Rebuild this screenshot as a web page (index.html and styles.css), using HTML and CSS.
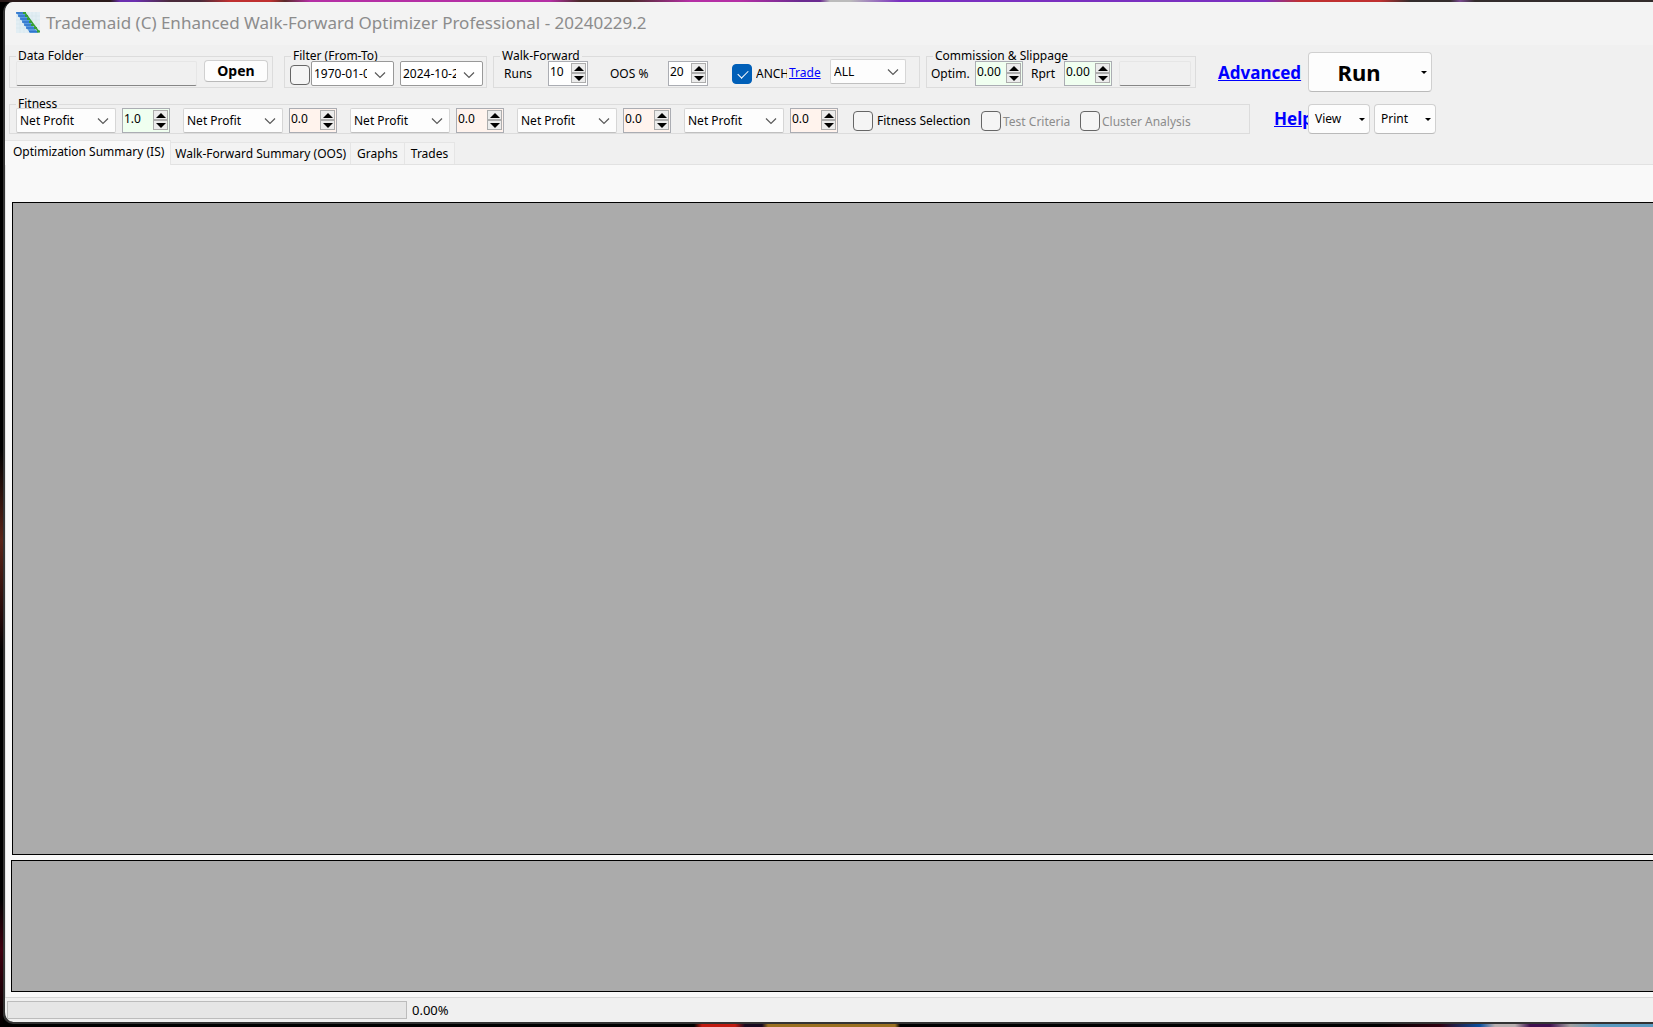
FILE: index.html
```html
<!DOCTYPE html>
<html lang="en">
<head>
  <meta charset="UTF-8" />
  <meta name="viewport" content="width=device-width, initial-scale=1.0" />
  <title>Trademaid (C) Enhanced Walk-Forward Optimizer Professional</title>
  <link rel="stylesheet" href="styles.css">
</head>
<body>
  <svg class="defs" width="0" height="0">
    <symbol id="chevron" viewBox="0 0 12 8"><path d="M1 1.5 6 6.5 11 1.5" fill="none" stroke="#5a5a5a" stroke-width="1.2"/></symbol>
    <symbol id="up" viewBox="0 0 10 5"><path d="M5 0 10 5H0z"/></symbol>
    <symbol id="down" viewBox="0 0 10 5"><path d="M0 0h10L5 5z"/></symbol>
  </svg>

  <div class="window">
    <header class="titlebar">
      <svg class="app-icon" viewBox="0 0 24 21">
        <path fill="#e2eef4" d="M0 0h24v21H0z"/>
        <path stroke="#d2e2ea" stroke-width=".5" d="M4 0v21M8 0v21M12 0v21M16 0v21M20 0v21M0 4h24M0 8h24M0 12h24M0 16h24"/>
        <path fill="#5a9be0" d="M0 0h8l14 21h-8z"/>
        <path stroke="#2f74cc" stroke-width="1.500" d="M0 1h8M2 4h8M4 7h8M6 10h8M8 13h8M10 16h9M13 19.500h9"/>
        <path stroke="#35a035" stroke-width="2" d="M7 1h3M9 4h3M11 7h3M13 10h3M15 13h3M18 16h3M21 19.500h3"/>
        <path stroke="#35a035" stroke-width="1.500" fill="none" d="M9 1l14 19"/>
      </svg>
      <h1>Trademaid (C) Enhanced Walk-Forward Optimizer Professional - 20240229.2</h1>
    </header>

    <div class="toolbar">
      <fieldset class="group">
        <legend>Data Folder</legend>
        <div class="fields folder">
          <input type="text" class="flat-input" aria-label="Data folder" readonly>
          <button class="btn open-btn">Open</button>
        </div>
      </fieldset>

      <fieldset class="group filter-group">
        <legend>Filter (From-To)</legend>
        <div class="fields filter">
          <input type="checkbox" class="check" aria-label="Use date filter">
          <div class="date"><input type="text" aria-label="From" value="1970-01-01"><svg class="chevron"><use href="#chevron"/></svg></div>
          <div class="date to"><input type="text" aria-label="To" value="2024-10-24"><svg class="chevron"><use href="#chevron"/></svg></div>
        </div>
      </fieldset>

      <fieldset class="group">
        <legend>Walk-Forward</legend>
        <div class="fields walk">
          <label class="runs" for="runs">Runs</label>
          <div class="spin narrow"><input type="text" id="runs" value="10"><span class="arrows"><button aria-label="Up"><svg><use href="#up"/></svg></button><button aria-label="Down"><svg><use href="#down"/></svg></button></span></div>
          <label class="oos" for="oos">OOS %</label>
          <div class="spin narrow"><input type="text" id="oos" value="20"><span class="arrows"><button aria-label="Up"><svg><use href="#up"/></svg></button><button aria-label="Down"><svg><use href="#down"/></svg></button></span></div>
          <input type="checkbox" class="check anch-check" id="anch" checked>
          <label class="anch" for="anch">ANCH</label>
          <a href="#" class="trade">Trade</a>
          <div class="combo trade-combo"><select aria-label="Trade"><option>ALL</option></select><svg class="chevron"><use href="#chevron"/></svg></div>
        </div>
      </fieldset>

      <fieldset class="group">
        <legend>Commission &amp; Slippage</legend>
        <div class="fields commission">
          <label class="optim" for="optim">Optim.</label>
          <div class="spin green"><input type="text" id="optim" value="0.00"><span class="arrows"><button aria-label="Up"><svg><use href="#up"/></svg></button><button aria-label="Down"><svg><use href="#down"/></svg></button></span></div>
          <label class="rprt" for="rprt">Rprt</label>
          <div class="spin green"><input type="text" id="rprt" value="0.00"><span class="arrows"><button aria-label="Up"><svg><use href="#up"/></svg></button><button aria-label="Down"><svg><use href="#down"/></svg></button></span></div>
          <input type="text" class="flat-input small" aria-label="Slippage" readonly>
        </div>
      </fieldset>

      <a href="#" class="big-link advanced">Advanced</a>
      <button class="btn run-btn"><span>Run</span><i class="caret"></i></button>
    </div>

    <div class="toolbar second">
      <fieldset class="group fitness-group">
        <legend>Fitness</legend>
        <div class="fields fitness">
          <div class="combo"><select aria-label="Fitness 1"><option>Net Profit</option></select><svg class="chevron"><use href="#chevron"/></svg></div>
          <div class="spin green"><input type="text" aria-label="Weight 1" value="1.0"><span class="arrows"><button aria-label="Up"><svg><use href="#up"/></svg></button><button aria-label="Down"><svg><use href="#down"/></svg></button></span></div>
          <div class="combo"><select aria-label="Fitness 2"><option>Net Profit</option></select><svg class="chevron"><use href="#chevron"/></svg></div>
          <div class="spin pink"><input type="text" aria-label="Weight 2" value="0.0"><span class="arrows"><button aria-label="Up"><svg><use href="#up"/></svg></button><button aria-label="Down"><svg><use href="#down"/></svg></button></span></div>
          <div class="combo"><select aria-label="Fitness 3"><option>Net Profit</option></select><svg class="chevron"><use href="#chevron"/></svg></div>
          <div class="spin pink"><input type="text" aria-label="Weight 3" value="0.0"><span class="arrows"><button aria-label="Up"><svg><use href="#up"/></svg></button><button aria-label="Down"><svg><use href="#down"/></svg></button></span></div>
          <div class="combo"><select aria-label="Fitness 4"><option>Net Profit</option></select><svg class="chevron"><use href="#chevron"/></svg></div>
          <div class="spin pink"><input type="text" aria-label="Weight 4" value="0.0"><span class="arrows"><button aria-label="Up"><svg><use href="#up"/></svg></button><button aria-label="Down"><svg><use href="#down"/></svg></button></span></div>
          <div class="combo"><select aria-label="Fitness 5"><option>Net Profit</option></select><svg class="chevron"><use href="#chevron"/></svg></div>
          <div class="spin pink"><input type="text" aria-label="Weight 5" value="0.0"><span class="arrows"><button aria-label="Up"><svg><use href="#up"/></svg></button><button aria-label="Down"><svg><use href="#down"/></svg></button></span></div>
          <label class="option selection"><input type="checkbox" class="check">Fitness Selection</label>
          <label class="option criteria"><input type="checkbox" class="check" disabled>Test Criteria</label>
          <label class="option cluster"><input type="checkbox" class="check" disabled>Cluster Analysis</label>
        </div>
      </fieldset>

      <a href="#" class="big-link help">Help</a>
      <button class="btn menu-btn"><span>View</span><i class="caret"></i></button>
      <button class="btn menu-btn"><span>Print</span><i class="caret"></i></button>
    </div>

    <nav class="tabs" role="tablist">
      <button class="tab active" role="tab">Optimization Summary (IS)</button>
      <button class="tab wide" role="tab">Walk-Forward Summary (OOS)</button>
      <button class="tab" role="tab">Graphs</button>
      <button class="tab" role="tab">Trades</button>
    </nav>

    <main class="page">
      <div class="grid main-grid"></div>
      <div class="grid sub-grid"></div>
    </main>

    <footer class="statusbar">
      <div class="progress"></div>
      <span>0.00%</span>
    </footer>
  </div>
</body>
</html>
```
FILE: styles.css
```css
* {
  box-sizing: border-box;
}

body {
  margin: 0;
  height: 100vh;
  padding: 2px 0 5px 3px;
  overflow: hidden;
  font-family: "Noto Sans", sans-serif;
  font-size: 12px;
  color: #000;
  background:
    linear-gradient(90deg, #2a1a1a 0 110px, #6b2fb0 120px 135px, #4a2a3a 170px 200px, #c03030 230px 270px, #5a2a2a 285px, #b52fa5 310px 550px, #4a2a2a 580px 630px, #b52fa5 690px 740px, #6a2a90 800px 820px, #bbb 830px 850px, #7a2fc0 900px 1265px, #c03030 1300px 1380px, #332c2c 1410px 1450px, #7a4a90 1460px, #332c2c 1475px) 0 0 / 100% 2px no-repeat,
    linear-gradient(90deg, #000 0 694px, #c01a10 702px 735px, #180a20 745px 762px, #9a7020 768px 895px, #000 900px 1380px, #300010 1440px, #0a50a0 1480px, #b8b0b0 1495px 1515px, #401050 1530px 1550px, #a0a0a0 1570px, #5a9ac0 1600px) 0 100% / 100% 3px no-repeat,
    linear-gradient(#000 0 450px, #5a2418 540px, #200808 620px, #000 650px 900px, #400010 950px, #000) 0 0 / 3px 100% no-repeat,
    #000;
}

input, select, button {
  font: inherit;
  color: inherit;
  margin: 0;
  padding: 0;
}

.defs {
  position: absolute;
}

.window {
  display: flex;
  flex-direction: column;
  height: 100%;
  border-left: 2px solid #333;
  border-radius: 10px 0 0 10px;
  background: #f0f0f0;
  box-shadow: 0 2px 0 #333;
  overflow: hidden;
}

.titlebar {
  display: flex;
  align-items: center;
  gap: 6px;
  height: 43px;
  padding: 0 11px 3px;
  background: #f3f3f3;
}

.app-icon {
  width: 24px;
  height: 21px;
}

.titlebar h1 {
  margin: 0;
  font-size: 17px;
  font-weight: 400;
  color: #8c8c8c;
  white-space: nowrap;
}

/* toolbars */
.toolbar {
  display: flex;
  align-items: flex-start;
  padding: 7px 4px 12px;
  white-space: nowrap;
}

.toolbar.second {
  padding: 0 4px 6px;
}

.group {
  flex: none;
  height: 32px;
  min-width: 0;
  margin: 4px 6px 0 0;
  padding: 0;
  border: 1px solid #dcdcdc;
}

.group legend {
  height: 1px;
  margin-left: 6px;
  padding: 0 2px;
  line-height: 0;
}

.fields {
  display: flex;
  align-items: flex-end;
  height: 29px;
}

.folder {
  gap: 7px;
  padding: 0 4px 0 6px;
}

.flat-input {
  width: 181px;
  height: 25px;
  border: 1px solid #e6e6e6;
  border-bottom-color: #868686;
  border-radius: 2px;
  background: #f0f0f0;
}

.flat-input.small {
  width: 72px;
  margin-left: 7px;
}

.btn {
  border: 1px solid #d0d0d0;
  border-bottom-color: #bababa;
  border-radius: 4px;
  background: #fdfdfd;
}

.open-btn {
  width: 64px;
  height: 22px;
  margin-bottom: 4px;
  font-size: 14px;
  font-weight: 700;
  line-height: 18px;
}

.group:first-child {
  margin-right: 11px;
}

.filter {
  padding: 0 3px 0 5px;
}

.check {
  appearance: none;
  position: relative;
  flex: none;
  width: 20px;
  height: 20px;
  border: 1px solid #666;
  border-radius: 4px;
  background: #f5f5f5;
}

.filter .check {
  margin: 0 1px 1px 0;
}

.check:checked {
  border-color: #005fb8;
  background: #005fb8;
}

.check:checked::after {
  content: "";
  position: absolute;
  left: 5px;
  top: 5px;
  width: 9px;
  height: 5px;
  border-left: 1px solid #fff;
  border-bottom: 1px solid #fff;
  transform: rotate(-45deg);
}

.date {
  position: relative;
  width: 83px;
  height: 25px;
  border: 1px solid #999;
  border-radius: 2px;
  background: #fff;
}

.date.to {
  margin-left: 6px;
}

.date input {
  width: 55px;
  height: 23px;
  padding-left: 2px;
  border: 0;
  background: none;
}

.chevron {
  position: absolute;
  right: 7px;
  top: 9px;
  width: 12px;
  height: 8px;
  pointer-events: none;
}

.combo {
  position: relative;
  width: 100px;
  height: 25px;
}

.combo select {
  appearance: none;
  width: 100%;
  height: 25px;
  padding: 0 0 0 3px;
  border: 1px solid #d6d6d6;
  border-bottom-color: #c0c0c0;
  border-radius: 2px;
  background: #fdfdfd;
}

.spin {
  display: flex;
  width: 48px;
  height: 25px;
  border: 1px solid #abadb3;
  background: #fff;
}

.spin.narrow {
  width: 40px;
}

.spin.green {
  background: #f0fff0;
}

.spin.pink {
  background: #fff3ed;
}

.spin input {
  flex: 1;
  width: 0;
  height: 18px;
  padding-left: 1px;
  border: 0;
  background: none;
}

.arrows {
  display: flex;
  flex-direction: column;
  width: 15px;
  margin: 1px 1px 0 0;
}

.arrows button {
  display: flex;
  align-items: center;
  justify-content: center;
  height: 10px;
  border: 1px solid #adadad;
  background: #ececec;
}

.arrows svg {
  flex: none;
  width: 10px;
  height: 5px;
}

.walk, .commission {
  line-height: 17px;
}

.walk {
  padding: 0 13px 0 10px;
}

.walk > label, .walk .trade, .commission > label {
  margin-bottom: 4px;
}

.runs {
  width: 44px;
}

.oos {
  width: 58px;
  margin-left: 22px;
}

.anch-check {
  margin: 0 4px 2px 24px;
}

.anch {
  width: 31px;
  overflow: hidden;
}

.walk .trade {
  width: 41px;
  margin: 0 0 5px 2px;
}

.trade-combo {
  width: 76px;
  margin-bottom: 2px;
}

.commission {
  padding: 0 4px;
}

.optim {
  width: 44px;
}

.rprt {
  width: 33px;
  margin-left: 8px;
}

a {
  color: #0000ff;
}

.big-link {
  font-size: 17px;
  font-weight: 700;
  line-height: 24px;
}

.advanced {
  width: 90px;
  margin: 9px 0 0 16px;
}

.run-btn {
  position: relative;
  width: 124px;
  height: 40px;
  padding-right: 22px;
  font-size: 22px;
  font-weight: 700;
}

.caret {
  position: absolute;
  right: 4px;
  top: 50%;
  margin-top: -1px;
  border: 3px solid transparent;
  border-top-color: #000;
  border-bottom: 0;
}

/* fitness row */
.fitness-group {
  height: 30px;
  margin-top: 0;
}

.toolbar .fitness-group {
  margin-right: 24px;
}

.fitness {
  height: 28px;
  padding-left: 6px;
}

.fitness .spin {
  margin: 0 13px 0 6px;
}

.option {
  display: flex;
  align-items: center;
  gap: 4px;
  height: 24px;
  background: #f0f0f0;
}

.selection {
  width: 128px;
  height: 25px;
  margin-left: 2px;
}

.criteria, .cluster {
  gap: 2px;
  color: #8c8c8c;
}

.criteria {
  width: 99px;
}

.cluster {
  width: 117px;
  margin-right: 52px;
}

.help {
  width: 34px;
  overflow: hidden;
  margin-top: 3px;
}

.menu-btn {
  position: relative;
  width: 62px;
  height: 30px;
  margin-right: 4px;
  padding: 0 0 2px 6px;
  text-align: left;
}

/* tabs */
.tabs {
  display: flex;
  align-items: flex-end;
  height: 25px;
  border-bottom: 1px solid #e2e2e2;
}

.tab {
  height: 22px;
  padding: 0 6px;
  border: 1px solid #e5e5e5;
  border-width: 1px 1px 0 0;
  background: #f3f3f3;
}

.tab.wide {
  padding: 0 4px;
}

.tab.active {
  height: 25px;
  margin-bottom: -1px;
  padding: 0 6px 3px 8px;
  background: #f9f9f9;
}

.page {
  flex: 1;
  display: flex;
  flex-direction: column;
  gap: 5px;
  padding: 37px 0 5px 5px;
  border-left: 1px solid #e5e5e5;
  background: #f9f9f9;
}

.grid {
  border: 1px solid #000;
  border-right: 0;
  background: #ababab;
}

.main-grid {
  flex: 5;
  margin-left: 1px;
}

.sub-grid {
  flex: 1;
}

.statusbar {
  display: flex;
  align-items: center;
  gap: 5px;
  height: 25px;
  padding: 0 2px;
  border-top: 1px solid #d7d7d7;
  font-size: 13px;
}

.progress {
  width: 400px;
  height: 18px;
  border: 1px solid #bcbcbc;
  background: #e6e6e6;
}
```
